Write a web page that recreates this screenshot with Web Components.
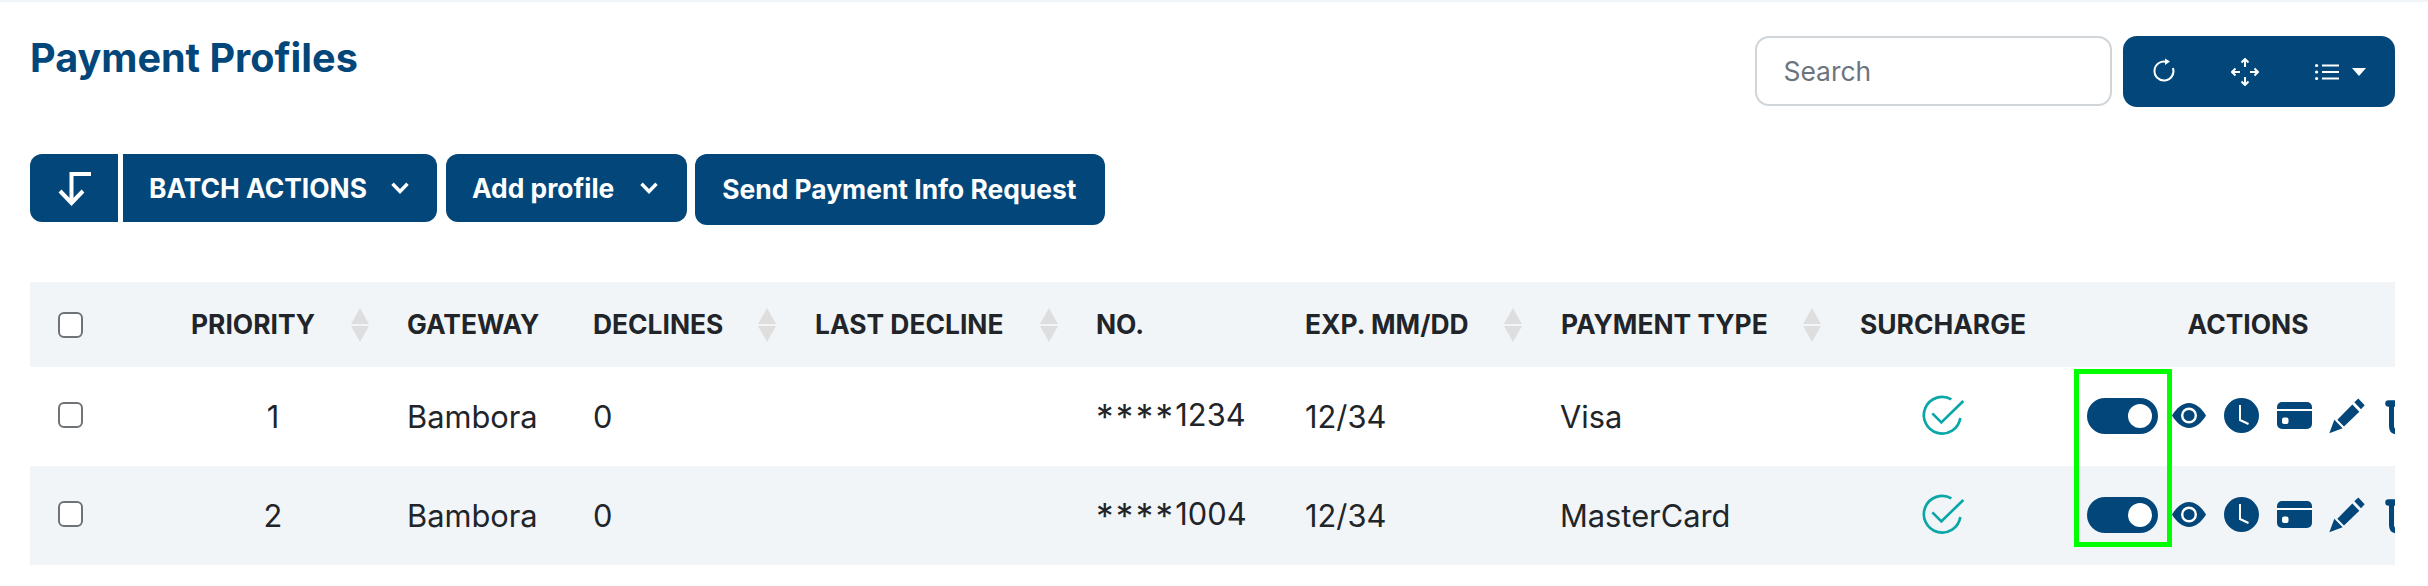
<!doctype html>
<html><head><meta charset="utf-8"><title>Payment Profiles</title>
<style>
html,body{margin:0;padding:0;background:#fff}
body{font-family:Inter,"Liberation Sans",sans-serif;color:#212529;width:2428px;height:586px;overflow:hidden}
</style></head>
<body>
<pp-app></pp-app>
<script>
const NAVY='#03477a';
class Base extends HTMLElement{
  render(html){ this.attachShadow({mode:'open'}).innerHTML=html; }
}
customElements.define('pp-toggle',class extends Base{connectedCallback(){this.render(`<style>
:host{display:flex;justify-content:flex-end;align-items:center;box-sizing:border-box;width:71px;height:36px;padding-right:6px;border-radius:18px;background:${NAVY};flex:none}
i{display:block;width:24px;height:24px;border-radius:50%;background:#fff}
</style><i></i>`)}});
customElements.define('pp-check',class extends Base{connectedCallback(){this.render(`<style>
:host{display:block;width:25px;height:26px}
input{appearance:none;-webkit-appearance:none;display:block;box-sizing:border-box;width:25px;height:26px;margin:0;background:#fff;border:2.5px solid #6f7276;border-radius:6px}
</style><input type="checkbox" aria-label="select">`)}});
customElements.define('pp-sort',class extends Base{connectedCallback(){this.render(`<style>
:host{display:block;width:18px;height:34px;flex:none}svg{display:block}
</style><svg width="18" height="34" viewBox="0 0 18 34"><path d="M9 0 18 16H0Z" fill="#dedede"/><path d="M0 18H18L9 34Z" fill="#dedede"/></svg>`)}});
customElements.define('pp-actions',class extends Base{connectedCallback(){this.render(`<style>
:host{display:flex;align-items:flex-start;height:36px;padding-left:46px}
svg{display:block;flex:none}
.eye{margin:5px 0 0 14px}.clock{margin-left:18px}.card{margin:4px 0 0 18px}.pen{margin:-1px 0 0 17px}.trash{margin:2px 0 0 20px}
</style>
<pp-toggle></pp-toggle>
<svg class="eye" width="34" height="25" viewBox="0 0 34 25"><path d="M0 12.5C4.500 5 10.500 0 17 0S29.500 5 34 12.500C29.500 20 23.500 25 17 25S4.500 20 0 12.500Z" fill="${NAVY}"/><circle cx="17" cy="12.500" r="6.800" fill="none" stroke="#fff" stroke-width="2.400"/></svg>
<svg class="clock" width="35" height="35" viewBox="0 0 35 35"><circle cx="17.500" cy="17.500" r="17.500" fill="${NAVY}"/><path d="M16 7V22L24.500 26" fill="none" stroke="#fff" stroke-width="2"/></svg>
<svg class="card" width="35" height="27" viewBox="0 0 35 27"><rect width="35" height="27" rx="5" fill="${NAVY}"/><rect y="7" width="35" height="2" fill="#fff"/><rect x="5" y="15.500" width="6.500" height="6.500" rx="2" fill="#fff"/></svg>
<svg class="pen" width="36" height="37" viewBox="27 20 108 110"><path d="M28 128 43 88 68 113ZM52 88 97 42 118 64 72 108ZM103 35 115 24 134 44 123 56Z" fill="${NAVY}"/></svg>
<svg class="trash" width="40" height="36" viewBox="0 0 40 36"><g fill="none" stroke="${NAVY}"><path d="M3.500 3.500H38" stroke-width="6.500" stroke-linecap="round"/><path d="M6.500 4V26Q6.500 32 12.500 32H30" stroke-width="5"/></g></svg>`)}});
customElements.define('pp-surcharge',class extends Base{connectedCallback(){this.render(`<style>
:host{display:flex;justify-content:center}svg{display:block;margin:-3px 0 0 2px}
</style><svg width="60" height="50" viewBox="0 0 180 150" fill="none" stroke="#0aa6a8" stroke-width="8"><path d="M112 28A55 55 0 1 0 139 84"/><path d="M55 70 82 97 148 33"/></svg>`)}});
customElements.define('pp-header',class extends Base{connectedCallback(){this.render(`<style>
:host{display:flex;justify-content:space-between;align-items:flex-start;height:71px}
h1{margin:0;font:700 39.6px/44px Inter,sans-serif;color:${NAVY}}
.r{display:flex;gap:11px}
.s{box-sizing:border-box;width:357px;height:70px;border:2.5px solid #d0d5da;border-radius:14px;padding:0 26.500px;font:400 26.4px/67px Inter,sans-serif;color:#6c757d}
.t{display:flex;align-items:center;box-sizing:border-box;width:272px;height:71px;padding-left:29px;background:${NAVY};border-radius:14px}
svg{display:block;flex:none}
</style>
<h1>Payment Profiles</h1>
<div class="r"><div class="s">Search</div>
<div class="t">
<svg style="margin-top:-2px" width="24" height="26" viewBox="0 0 24 26" fill="none" stroke="#fff" stroke-width="2"><path d="M15 4A9.500 9.500 0 1 0 21 10"/><path d="M13 .5 18 3.500 13 7Z" fill="#fff" stroke="none"/></svg>
<svg style="margin-left:55px" width="28" height="28" viewBox="0 0 28 28" fill="none" stroke="#fff" stroke-width="2"><path d="M14 1V9M10.500 4.500 14 1 17.500 4.500M14 19V27M10.500 23.500 14 27 17.500 23.500M1 14H9M4.500 10.500 1 14 4.500 17.500M19 14H27M23.500 10.500 27 14 23.500 17.500"/></svg>
<svg style="margin-left:56px" width="24" height="18" viewBox="0 0 24 18" fill="none" stroke="#fff" stroke-width="2"><path d="M7 2.500H24M7 9H24M7 15.500H24"/><g fill="#fff" stroke="none"><circle cx="1.600" cy="2.500" r="1.600"/><circle cx="1.600" cy="9" r="1.600"/><circle cx="1.600" cy="15.500" r="1.600"/></g></svg>
<svg style="margin-left:13px" width="14" height="8" viewBox="0 0 14 8"><path d="M0 0H14L7 8Z" fill="#fff"/></svg>
</div></div>`)}});
customElements.define('pp-button',class extends Base{connectedCallback(){this.render(`<style>
:host{display:flex;align-items:center;box-sizing:border-box;height:68px;background:${NAVY};color:#fff;font:700 26.4px/1 Inter,sans-serif;white-space:nowrap;border-radius:12px}
svg{display:block;margin-left:var(--chev-gap,26px)}
</style><slot></slot>${this.hasAttribute('chev')?`<svg width="18" height="12" viewBox="0 0 18 12" fill="none" stroke="#fff" stroke-width="3.400"><path d="M1.500 1.800 9 9.500 16.500 1.800"/></svg>`:''}`)}});
customElements.define('pp-actionbar',class extends Base{connectedCallback(){this.render(`<style>
:host{display:flex;align-items:flex-start;margin-top:47px}
.a{width:88px;justify-content:center;border-radius:12px 0 0 12px;margin-right:5px}
.b{--chev-gap:24px;padding:0 28px 0 26px;border-radius:0 12px 12px 0;margin-right:9px}
.c{padding:0 29px 0 26px;margin-right:8px}
.d{padding:0 29px 0 27px;height:71px}
svg{display:block}
</style>
<pp-button class="a"><svg width="40" height="45" viewBox="55 165 40 45" fill="none" stroke="#fff" stroke-width="4" style="display:block"><path d="M92 173H72.500V202M61 190 72.500 202 84 190"/></svg></pp-button>
<pp-button class="b" chev>BATCH ACTIONS</pp-button>
<pp-button class="c" chev>Add profile</pp-button>
<pp-button class="d">Send Payment Info Request</pp-button>`)}});
customElements.define('pp-table',class extends Base{connectedCallback(){
const cols=[124,238,185,222,282,208,256,299,197,414];
const heads=[['<pp-check></pp-check>'],['PRIORITY',1],['GATEWAY'],['DECLINES',1],['LAST DECLINE',1],['NO.'],['EXP. MM/DD',1],['PAYMENT TYPE',1],['SURCHARGE'],['ACTIONS']];
const rows=[['1','Bambora','0','','<span class="m">****</span>1234','12/34','Visa'],['2','Bambora','0','','<span class="m">****</span>1004','12/34','MasterCard']];
this.render(`<style>
:host{display:block;position:relative;margin-top:57px;width:2365px;height:283px;overflow:hidden}
table{border-collapse:collapse;table-layout:fixed;width:2425px}
th,td{padding:0 0 0 16px;vertical-align:middle;box-sizing:border-box;white-space:nowrap}
th{height:85px;font:700 26.4px/1 Inter,sans-serif;background:#f2f5f8;text-align:left}
td{height:99px;font:400 30.8px/1 Inter,sans-serif;padding-top:2px}
.m{font-size:35px;letter-spacing:2.300px;vertical-align:-4px}
tbody tr:nth-child(2) td{background:#f2f5f8}
th div{display:flex;justify-content:space-between;align-items:center;padding-right:23px}
th:first-child{padding-left:28px}
td:first-child{padding:0 0 3px 28px}
th:nth-child(2){padding-left:37px}
td:nth-child(2){text-align:center;padding:2px 0 0}
th:nth-child(3),td:nth-child(3),th:nth-child(6),td:nth-child(6),td:nth-child(8){padding-left:15px}
th:nth-child(10){text-align:center;padding:0}
td:nth-child(9){padding:0}
td:nth-child(10){padding:0 0 1px}
.mark{position:absolute;left:2044px;top:87px;width:98px;height:178px;box-sizing:border-box;border:5px solid #0f0}
</style><table><colgroup>${cols.map(w=>`<col style="width:${w}px">`).join('')}</colgroup>
<thead><tr>${heads.map(h=>`<th>${h[1]?`<div><span>${h[0]}</span><pp-sort></pp-sort></div>`:h[0]}</th>`).join('')}</tr></thead>
<tbody>${rows.map(r=>`<tr><td><pp-check></pp-check></td>${r.map(c=>`<td>${c}</td>`).join('')}<td><pp-surcharge></pp-surcharge></td><td><pp-actions></pp-actions></td></tr>`).join('')}</tbody>
</table><div class="mark"></div>`)}});
customElements.define('pp-app',class extends Base{connectedCallback(){this.render(`<style>
:host{display:block;box-sizing:border-box;border-top:2px solid #f2f5f8;padding:34px 33px 0 30px;height:586px}
</style><pp-header></pp-header><pp-actionbar></pp-actionbar><pp-table></pp-table>`)}});
</script>
</body></html>
